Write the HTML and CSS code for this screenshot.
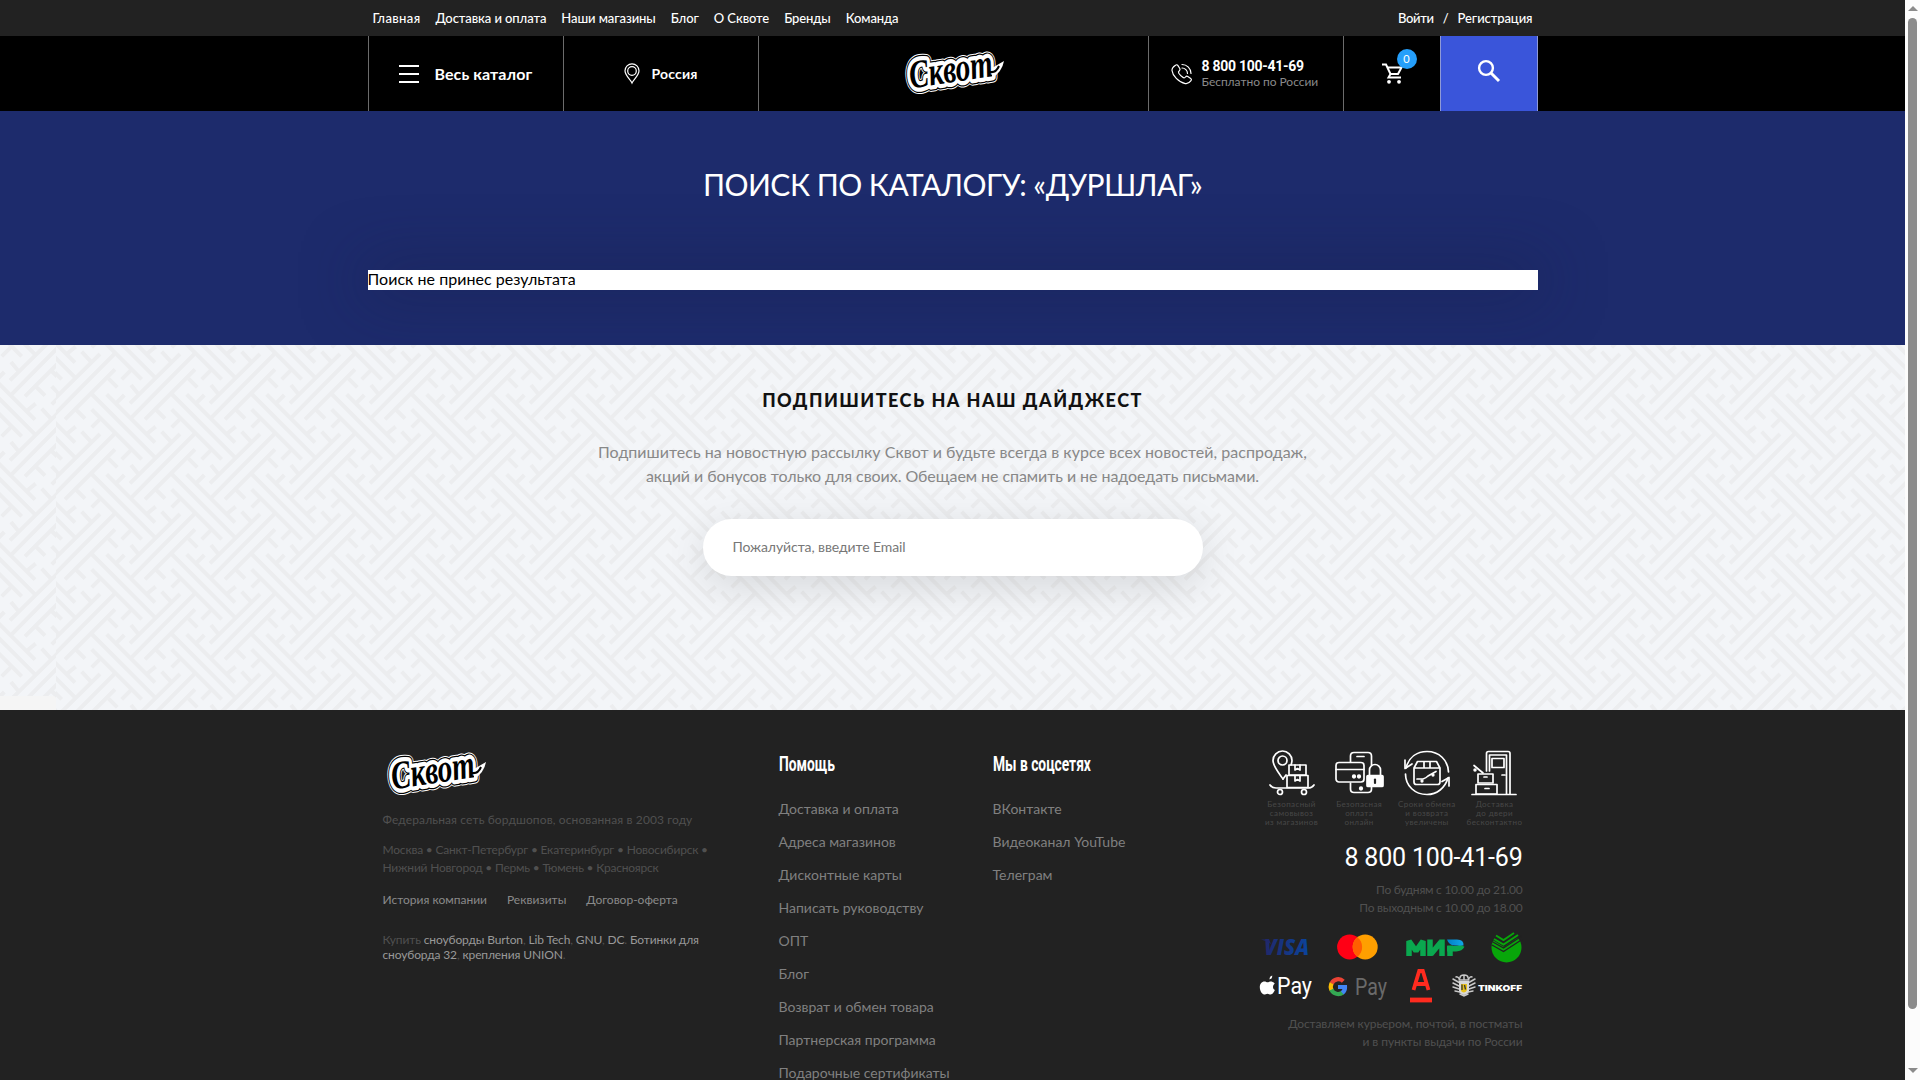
FILE: index.html
```html
<!DOCTYPE html>
<html lang="ru">
<head>
<meta charset="utf-8">
<title>Сквот — поиск по каталогу</title>
<link rel="stylesheet" href="styles.css">
</head>
<body>
<svg class="defs" aria-hidden="true">
  <defs>
    <symbol id="logo" viewBox="0 0 104 46">
      <g class="logo-word" transform="rotate(-8.5 52 23)">
        <text class="logo-l1" x="8" y="33" textLength="84" lengthAdjust="spacingAndGlyphs">Сквот</text>
        <text class="logo-l2" x="8" y="33" textLength="84" lengthAdjust="spacingAndGlyphs">Сквот</text>
        <text class="logo-l3" x="8" y="33" textLength="84" lengthAdjust="spacingAndGlyphs">Сквот</text>
      </g>
      <path d="M91 19 L103 12 Q101 23 91 29 Z" fill="#fff"/>
      <path class="logo-tail" d="M89 23 Q95 24 98 17" fill="none" stroke-width="2"/>
    </symbol>
  </defs>
</svg>
<div class="window">
<div class="page">

  <div class="topbar">
    <div class="container topbar-row">
      <nav class="nav">
        <a class="home">Главная</a><a>Доставка и оплата</a><a>Наши магазины</a><a>Блог</a><a>О Сквоте</a><a>Бренды</a><a>Команда</a>
      </nav>
      <div class="auth"><a class="login">Войти</a><span>/</span><a>Регистрация</a></div>
    </div>
  </div>

  <header class="header">
    <div class="container header-row">
      <div class="cell cell-catalog">
        <i class="burger"><b></b><b></b><b></b></i>
        <span>Весь каталог</span>
      </div>
      <div class="cell cell-city">
        <svg width="16" height="21" viewBox="0 0 16 21" fill="none" stroke="#fff" stroke-width="1.200"><path d="M8 20 C6.500 16.500 1 12.500 1 7.800 A7 7 0 0 1 15 7.800 C15 12.500 9.500 16.500 8 20Z"/><circle cx="8" cy="8" r="4.300"/></svg>
        <span>Россия</span>
      </div>
      <div class="cell cell-logo"><svg width="104" height="46"><use href="#logo"/></svg></div>
      <div class="cell cell-phone">
        <svg width="21" height="22" viewBox="0 0 21 22" fill="none" stroke="#fff" stroke-width="1.200" stroke-linejoin="round" stroke-linecap="round"><path d="M4.500 2.200 C5.300 1.500 6.300 1.700 6.800 2.400 L8.800 5.500 C9.300 6.300 9 7.200 8.300 7.800 C7.300 8.600 7.200 9.300 7.800 10.300 C9 12.200 10.400 13.700 12.300 14.600 C13.200 15.100 13.800 14.900 14.500 14 C15.100 13.200 16 13 16.800 13.500 L19.700 15.400 C20.500 15.900 20.600 16.900 20 17.700 C18.500 19.800 16.500 21 14.300 20.600 C7.500 19.300 1.500 12.500 1 7.500 C.800 5.200 2.500 3.500 4.500 2.200Z"/><path d="M11 1.500 C16 1.500 20 5.500 20 10.500 M11 5 C14 5 16.500 7.500 16.500 10.500"/></svg>
        <div><strong>8 800 100-41-69</strong><small>Бесплатно по России</small></div>
      </div>
      <div class="cell cell-cart">
        <svg width="22" height="21" viewBox="0 0 22 21" fill="none" stroke="#fff" stroke-width="2"><path d="M0 1.500 H4 L8.500 11 L6.500 14.500 H19"/><path d="M5 4.500 H19.500 L16 11 H8.500"/><circle cx="7" cy="18.800" r="1.900" fill="#fff" stroke="none"/><circle cx="17" cy="18.800" r="1.900" fill="#fff" stroke="none"/></svg>
        <span class="badge">0</span>
      </div>
      <div class="cell cell-search">
        <svg width="24" height="24" viewBox="0 0 24 24" fill="none" stroke="#fff"><circle cx="9" cy="9" r="6.900" stroke-width="2.400"/><path d="M14 14 L22 22" stroke-width="3"/></svg>
      </div>
    </div>
  </header>

  <main class="search">
    <h1>ПОИСК ПО КАТАЛОГУ: «ДУРШЛАГ»</h1>
    <div class="container result">Поиск не принес результата</div>
  </main>

  <section class="digest">
    <svg class="weave" aria-hidden="true">
      <defs>
        <g id="strokes" fill="none" stroke="#ecedef" stroke-width="12">
          <path d="M585 28 L435 178 M585 -20 L395 172 M540 -18 L390 130"/>
          <path d="M320 103 L465 248 M275 102 L465 292 M275 148 L425 298"/>
          <path d="M565 55 L592 82 M467 148 L495 176 M373 105 L345 133 M467 200 L440 222 M302 175 L275 202 M395 268 L365 298 M393 75 L415 102 M485 215 L512 244"/>
        </g>
        <pattern id="tile" width="240" height="240" patternUnits="userSpaceOnUse" patternTransform="translate(0 15) scale(.33333)">
          <use href="#strokes"/><use href="#strokes" x="-240"/><use href="#strokes" x="-480"/>
          <use href="#strokes" y="240"/><use href="#strokes" x="-240" y="240"/><use href="#strokes" x="-480" y="240"/>
          <use href="#strokes" y="-240"/><use href="#strokes" x="-240" y="-240"/><use href="#strokes" x="-480" y="-240"/>
        </pattern>
        <pattern id="tile-edge" href="#tile" patternTransform="translate(-40 -8) scale(.33333)"/>
      </defs>
      <rect x="56" width="1849" height="365" fill="url(#tile)"/>
      <rect width="56" height="365" fill="url(#tile-edge)"/>
      <path d="M0 351 H53 Q56 351 56 354 V365 H0Z" fill="#f5f5f5"/>
    </svg>
    <h2>ПОДПИШИТЕСЬ НА НАШ ДАЙДЖЕСТ</h2>
    <p class="lead"><span class="lead-a">Подпишитесь на новостную рассылку Сквот и будьте всегда в курсе всех новостей, распродаж,</span><br><span class="lead-b">акций и бонусов только для своих. Обещаем не спамить и не надоедать письмами.</span></p>
    <input class="email" type="email" placeholder="Пожалуйста, введите Email">
  </section>

  <footer class="footer">
    <div class="container footer-row">
      <div class="about">
        <svg width="104" height="46" class="footer-logo"><use href="#logo"/></svg>
        <p class="since">Федеральная сеть бордшопов, основанная в 2003 году</p>
        <p class="cities">Москва • Санкт-Петербург • Екатеринбург • Новосибирск •<br>Нижний Новгород • Пермь • Тюмень • Красноярск</p>
        <div class="docs"><a>История компании</a><a>Реквизиты</a><a>Договор-оферта</a></div>
        <p class="buy">Купить <a>сноуборды Burton</a>, <a>Lib Tech</a>, <a>GNU</a>, <a>DC</a>. <a>Ботинки для<br>сноуборда 32</a>, <a>крепления UNION</a>.</p>
      </div>
      <div class="links help">
        <h3>Помощь</h3>
        <a>Доставка и оплата</a><a>Адреса магазинов</a><a>Дисконтные карты</a><a>Написать руководству</a><a>ОПТ</a><a>Блог</a><a>Возврат и обмен товара</a><a>Партнерская программа</a><a>Подарочные сертификаты</a>
      </div>
      <div class="links social">
        <h3>Мы в соцсетях</h3>
        <a>ВКонтакте</a><a>Видеоканал YouTube</a><a>Телеграм</a>
      </div>
      <div class="contacts">
        <div class="perks">
          <div class="perk">
            <svg width="46" height="46" viewBox="0 0 46 46" fill="none" stroke="#fff" stroke-width="1.700" stroke-linecap="round" stroke-linejoin="round"><path d="M14 29 C9 22 4 16 4 10.500 A9.500 9.500 0 0 1 23 10.500 C23 12 22.500 13.500 22 15"/><path d="M14 29 L17 25"/><circle cx="13.500" cy="10.500" r="4.500"/><rect x="20" y="15" width="17" height="10"/><rect x="18" y="25.500" width="21" height="12"/><path d="M26 15 V20 L28.500 18.500 L31 20 V15 M26 26 V31 L28.500 29.500 L31 31 V26"/><path d="M1 35 Q3 38 7 38 H39 Q43 38 45 35"/><circle cx="11" cy="42" r="2.500"/><circle cx="35" cy="42" r="2.500"/></svg>
            <span>Безопасный<br>самовывоз<br>из магазинов</span>
          </div>
          <div class="perk">
            <svg width="48" height="46" viewBox="0 0 48 46" fill="none" stroke="#fff" stroke-width="1.700" stroke-linecap="round" stroke-linejoin="round"><path d="M15.500 12 V6 Q15.500 2.500 19 2.500 H33 Q36.500 2.500 36.500 6 V15 M36.500 37 V39 Q36.500 42.500 33 42.500 H19 Q15.500 42.500 15.500 39 V33"/><path d="M22 6.500 H29"/><rect x="1" y="12.500" width="28" height="19.500" rx="3"/><path d="M1 19.500 H29"/><circle cx="19" cy="26.500" r="1.300" fill="#fff"/><circle cx="24" cy="26.500" r="1.300" fill="#fff"/><circle cx="26" cy="38.500" r="1.300" fill="#fff"/><rect x="32" y="25.500" width="16" height="11" rx="1" fill="#fff"/><path d="M34.500 25 V20 A5.500 5.500 0 0 1 45.500 20 V25"/><path d="M40 29.500 V33" stroke="#222" stroke-width="2.200"/></svg>
            <span>Безопасная<br>оплата<br>онлайн</span>
          </div>
          <div class="perk">
            <svg width="46" height="46" viewBox="0 0 46 46" fill="none" stroke="#fff" stroke-width="1.700" stroke-linecap="round" stroke-linejoin="round"><path d="M2 18 C5 7 13 1.500 23 1.500 C35 1.500 44 10 44.500 22 M44 28 C41 38 33 44.500 23 44.500 C11 44.500 1.500 36 1.500 24"/><path d="M1 10 V18.500 L8 14 M38 31.500 L45 27.500 V36"/><path d="M10 18 L13.500 11.500 H32.500 L36 18 V32 Q36 34.500 33.500 34.500 H12.500 Q10 34.500 10 32 Z M10 18 H36 M20 11.500 V18 M26 11.500 V18"/><path d="M13 29 L19 29 Q22 28 24 26 L32 21.500"/><circle cx="18" cy="31" r=".8"/><circle cx="29" cy="25" r=".8"/></svg>
            <span>Сроки обмена<br>и возврата<br>увеличены</span>
          </div>
          <div class="perk">
            <svg width="46" height="46" viewBox="0 0 46 46" fill="none" stroke="#fff" stroke-width="1.700" stroke-linecap="round" stroke-linejoin="round"><path d="M1 44.500 H45"/><path d="M15.500 21 V3.500 Q15.500 1.500 17.500 1.500 H37 Q39 1.500 39 3.500 V44"/><path d="M18.500 21 V5 H35.500 V44"/><rect x="21" y="8.500" width="12" height="9"/><path d="M31 25 H34"/><rect x="7" y="24" width="15" height="9"/><rect x="5" y="34.500" width="21" height="9.500"/><path d="M13 27 H16 M14 38.500 H18"/><path d="M3 15.500 L12 23"/><circle cx="4" cy="20" r=".9"/></svg>
            <span>Доставка<br>до двери<br>бесконтактно</span>
          </div>
        </div>
        <div class="hotline">8 800 100-41-69</div>
        <p class="hours">По будням с 10.00 до 21.00<br>По выходным с 10.00 до 18.00</p>
        <div class="pay pay-cards">
          <svg width="50" height="34" viewBox="0 0 50 34"><defs><linearGradient id="visa-fill"><stop offset="0" stop-color="#20286b"/><stop offset="1" stop-color="#0b449c"/></linearGradient></defs><text x="3" y="25" class="visa" textLength="45" lengthAdjust="spacingAndGlyphs" fill="url(#visa-fill)">VISA</text><path d="M0 9.500 H8 L10 14 Q6 10.500 0 9.500Z" fill="#20286b"/></svg>
          <svg class="mastercard" width="41" height="34" viewBox="0 0 41 34"><circle cx="12.600" cy="17" r="12.500" fill="#ff0015"/><circle cx="28.200" cy="17" r="12.500" fill="#ff9f00"/><path d="M20.400 7.200 A12.500 12.500 0 0 1 20.400 26.800 A12.500 12.500 0 0 1 20.400 7.200Z" fill="#ff5f00"/></svg>
          <svg width="58" height="34" viewBox="0 0 58 34"><g fill="none" stroke="#0aa84f" stroke-width="5.500"><path d="M3 26 V11 L10 21 L17 11 V26" stroke-linejoin="bevel"/><path d="M24 9.500 V26 M25 24 L35 12 M36 9.500 V26"/><path d="M44 26 V15.500 M41 18.700 H50 Q54.500 18.500 56 15.500"/></g><defs><linearGradient id="mir-fill"><stop offset="0" stop-color="#007fc4"/><stop offset="1" stop-color="#12a6e8"/></linearGradient></defs><path d="M41 9.500 H51 Q58 9.500 57.500 15.500 H49 Q43 15.500 41 9.500Z" fill="url(#mir-fill)"/></svg>
          <svg width="31" height="34" viewBox="0 0 31 34"><circle cx="15.500" cy="17.500" r="15" fill="#08a60a"/><path d="M0 5 V0 H31 V5 L13 17 L0 9Z" fill="#222"/><g fill="none" stroke="#08a60a" stroke-width="2"><path d="M5 5.500 L12.500 10 L23 3"/><path d="M3 9 L12.500 14.500 L27 5"/></g><g fill="none" stroke="#222" stroke-width="1.300"><path d="M1 11.500 L12.500 18 L30 6.500"/><path d="M1 15 L12.500 21.500 L31 9.500"/></g></svg>
        </div>
        <div class="pay pay-wallets">
          <svg width="56" height="36" viewBox="0 0 56 36"><path d="M10.500 10.500 C10.500 8.500 11.500 7 13.200 6.500 C13.400 8.600 12.300 10.200 10.500 10.500Z M14 18 C14 15.800 15.300 15 15.800 14.700 C14.500 12.800 12.600 12.500 11.800 12.500 C10.500 12.500 9.300 13.300 8.600 13.300 C7.800 13.300 6.700 12.500 5.600 12.500 C2.500 12.500 .800 15 .800 18.200 C.800 21.500 3 25.500 5.200 25.500 C6.300 25.500 7.200 24.700 8.500 24.700 C9.800 24.700 10.400 25.500 11.600 25.500 C13.700 25.500 15.300 22.500 15.900 21 C14.800 20.500 14 19.500 14 18Z" fill="#fff"/><text x="18" y="25" class="wallet" fill="#fff" textLength="35" lengthAdjust="spacingAndGlyphs">Pay</text></svg>
          <svg class="gpay" width="62" height="36" viewBox="0 0 62 36"><g fill="none" stroke-width="4.200"><path d="M15.300 12.200 A7.400 7.400 0 0 0 3.600 14.500" stroke="#ea4335"/><path d="M3.600 14.300 A7.800 7.800 0 0 0 3.600 21.200" stroke="#fbbc04"/><path d="M3.400 20.600 A7.500 7.500 0 0 0 14.800 23.500" stroke="#34a853"/><path d="M10 18 H17 Q17.200 21.500 14.300 24" stroke="#4285f4"/></g><text x="27" y="26" class="wallet" fill="#6a6a6a" textLength="32" lengthAdjust="spacingAndGlyphs">Pay</text></svg>
          <svg width="22" height="36" viewBox="0 0 22 36"><path d="M3.500 22 L9.200 3 H12.800 L18.500 22 M5 16 H17" transform="translate(0 -1)" fill="none" stroke="#ff2b1f" stroke-width="3.800"/><path d="M0 31 H22" stroke="#ff2b1f" stroke-width="4.800"/></svg>
          <svg width="70" height="36" viewBox="0 0 70 36"><g fill="none" stroke="#c9c9c9" stroke-width="1.500" stroke-linecap="round"><path d="M1 10 L8 14 M1 14 L7 17 M1 18 L7 20 M3 22 L8 23 M23 10 L16 14 M23 14 L17 17 M23 18 L17 20 M21 22 L16 23"/><path d="M8 9 Q8 6 12 6 Q16 6 16 9 M7 11 H17 M12 7 V10 M8 25 L12 27 L16 25 M4 8 Q6 7 8 11 M20 8 Q18 7 16 11"/></g><path d="M7 12 H17 V22 Q16 25 12 26 Q8 25 7 22Z" fill="#d8d8d8"/><path d="M9 15 H15 V21 Q14 23 12 23.500 Q9 23 9 21Z" fill="#e9c21b"/><path d="M10 15.500 V21 M12.500 16 L13.500 20.500" stroke="#333" stroke-width="1.300"/><text x="26" y="21.500" class="tinkoff" fill="#fff" textLength="44" lengthAdjust="spacingAndGlyphs">TINKOFF</text></svg>
        </div>
        <p class="delivery"><span class="delivery-a">Доставляем курьером, почтой, в постматы</span><br>и в пункты выдачи по России</p>
      </div>
    </div>
  </footer>
</div>
<div class="scrollbar"><i class="arrow-up"></i><i class="thumb"></i><i class="arrow-down"></i></div>
</div>
</body>
</html>
```
FILE: styles.css
```css
* { box-sizing: border-box; }
body { margin: 0; font-family: Lato, "Liberation Sans", sans-serif; font-size: 16px; color: #000; overflow: hidden; }
h1, h2, h3, p { margin: 0; font-weight: 400; }
svg { display: block; flex: none; overflow: visible; }
.defs { position: absolute; width: 0; height: 0; }
.window { display: flex; height: 1080px; overflow: hidden; }
.page { width: 1905px; height: 1080px; overflow: hidden; flex: none; display: flex; flex-direction: column; }
.container { width: 1170px; margin: 0 auto; }

/* Scrollbar */
.scrollbar { width: 15px; background: #fcfcfc; display: flex; flex-direction: column; align-items: center; padding: 6px 0 7px; }
.arrow-up { border: 5px solid transparent; border-top: 0; border-bottom: 5px solid #8b8b8b; }
.arrow-down { border: 5px solid transparent; border-bottom: 0; border-top: 5px solid #8b8b8b; margin-top: auto; }
.thumb { width: 9px; height: 991px; border-radius: 5px; background: #8b8b8b; margin-top: 7px; }

/* Logo lettering */
#logo { overflow: visible; }
.logo-word { font: italic 700 40px "Liberation Serif", serif; stroke-linejoin: round; }
.logo-l1 { fill: #fff; stroke: #fff; stroke-width: 13px; }
.logo-l2 { fill: #fff; stroke: #000; stroke-width: 11px; }
.logo-l3 { fill: #000; stroke: #fff; stroke-width: 8.5px; paint-order: stroke; }
.logo-tail { stroke: #000; }

/* Top bar */
.topbar { height: 36px; background: #222; color: #fff; flex: none; }
.topbar-row { height: 36px; display: flex; justify-content: space-between; align-items: center; padding: 0 5px 1px; font-size: 13px; font-weight: 500; line-height: 18px; letter-spacing: -.08px; white-space: nowrap; }
.nav { display: flex; gap: 15px; }
.home { letter-spacing: .37px; }
.auth { display: flex; gap: 9px; }
.login { letter-spacing: -.3px; }

/* Header */
.header { background: #000; height: 75px; flex: none; }
.header-row { height: 75px; display: flex; color: #fff; border-right: 1px solid #8f9ad6; }
.cell { border-left: 1px solid #6b6b6b; display: flex; align-items: center; white-space: nowrap; }
.cell span { margin-top: -1px; }
.cell-catalog { width: 195px; padding-left: 30px; gap: 16px; font-size: 16px; font-weight: 700; letter-spacing: .08px; }
.burger { width: 20px; height: 18px; display: flex; flex-direction: column; justify-content: space-between; }
.burger b { height: 2px; background: #fff; }
.cell-city { width: 195px; justify-content: center; gap: 12px; font-size: 14px; font-weight: 700; letter-spacing: .15px; }
.cell-logo { width: 390px; justify-content: center; padding-bottom: 4px; }
.cell-phone { width: 195px; padding-left: 22px; gap: 10px; }
.cell-phone strong { display: block; font: 700 14px/16px Roboto, sans-serif; letter-spacing: -.28px; }
.cell-phone small { display: block; font-size: 12px; line-height: 15px; color: #8a8a8a; letter-spacing: -.03px; }
.cell-cart { width: 97px; padding-left: 38px; position: relative; }
.badge { position: absolute; left: 53px; top: 14px; width: 20px; height: 20px; border-radius: 50%; background: #259ffb; font-size: 11px; line-height: 20px; text-align: center; }
.cell-search { flex: 1; background: #3a55da; border-color: #8f9ad6; padding: 0 0 6px 36px; }

/* Search result */
.search { background: #1d2b6c; height: 234px; flex: none; padding-top: 55px; text-align: center; overflow: hidden; }
.search h1 { color: #fff; font-size: 30px; line-height: 36px; letter-spacing: -.52px; }
.result { background: #fff; margin-top: 68px; height: 20px; line-height: 18px; text-align: left; letter-spacing: .04px; box-shadow: 0 0 60px 4px rgba(25, 32, 75, .55); }

/* Digest */
.digest { position: relative; background: #f3f5f8; height: 365px; flex: none; display: flex; flex-direction: column; align-items: center; }
.weave { position: absolute; inset: 0; width: 100%; height: 100%; overflow: hidden; }
.digest h2, .lead, .email { position: relative; }
.digest h2 { font-size: 18px; font-weight: 900; line-height: 24px; letter-spacing: 1.47px; color: #111; margin-top: 43px; }
.lead { margin-top: 28px; line-height: 24px; color: #888; text-align: center; white-space: nowrap; }
.lead-a { letter-spacing: .03px; }
.lead-b { letter-spacing: -.06px; }
.email { margin-top: 31px; width: 500px; height: 57px; border: 0; border-radius: 29px; padding: 0 30px 3px; background: #fff; font: 14px Lato, sans-serif; letter-spacing: -.09px; box-shadow: 0 10px 40px rgba(0, 0, 0, .12); }
.email::placeholder { color: #777; }

/* Footer */
.footer { background: #222; flex: 1; min-height: 0; overflow: hidden; color: #505050; font-size: 12px; }
.footer .logo-l2, .footer .logo-tail { stroke: #222; }
.footer-row { display: flex; padding: 40px 15px 0 15px; white-space: nowrap; }
.about { width: 396px; line-height: 18px; }
.since { margin-top: 15px; letter-spacing: .12px; }
.cities { margin-top: 12px; letter-spacing: -.2px; }
.docs { display: flex; gap: 20px; margin-top: 14px; color: #8a8a8a; }
.buy { margin-top: 23px; line-height: 15px; letter-spacing: -.13px; }
.buy a { color: #999; }
.links { display: flex; flex-direction: column; color: #808080; font-size: 14px; line-height: 33px; }
.help { width: 214px; }
.social { width: 266px; }
.links h3 { font: 700 20px/26px Roboto, sans-serif; color: #fff; margin: 1px 0 15px; transform: scaleX(.69); transform-origin: 0 50%; }
.contacts { width: 264px; text-align: right; line-height: 18px; }
.perks { display: flex; justify-content: space-between; width: 261px; margin-left: 4px; }
.perk { width: 58px; display: flex; flex-direction: column; align-items: center; text-align: center; font-size: 8px; line-height: 9px; letter-spacing: .4px; color: #484848; }
.perk span { margin-top: 4px; }
.hotline { font: 25px/30px Roboto, sans-serif; color: #fff; letter-spacing: -.18px; margin-top: 16px; }
.hours { margin-top: 8px; letter-spacing: -.25px; }
.pay { display: flex; justify-content: space-between; align-items: center; }
.pay-cards { margin: 13px 1px 0 2px; }
.mastercard { margin: 0 1px 0 -1px; }
.pay-wallets { margin: 5px 1px 0 0; }
.gpay { margin: 0 0 0 -7px; }
.visa { font: italic 900 22px "Open Sans", sans-serif; }
.wallet { font: 400 23px Roboto, sans-serif; }
.tinkoff { font: 900 8px Inter, sans-serif; }
.delivery { margin-top: 10px; letter-spacing: -.09px; }
```
